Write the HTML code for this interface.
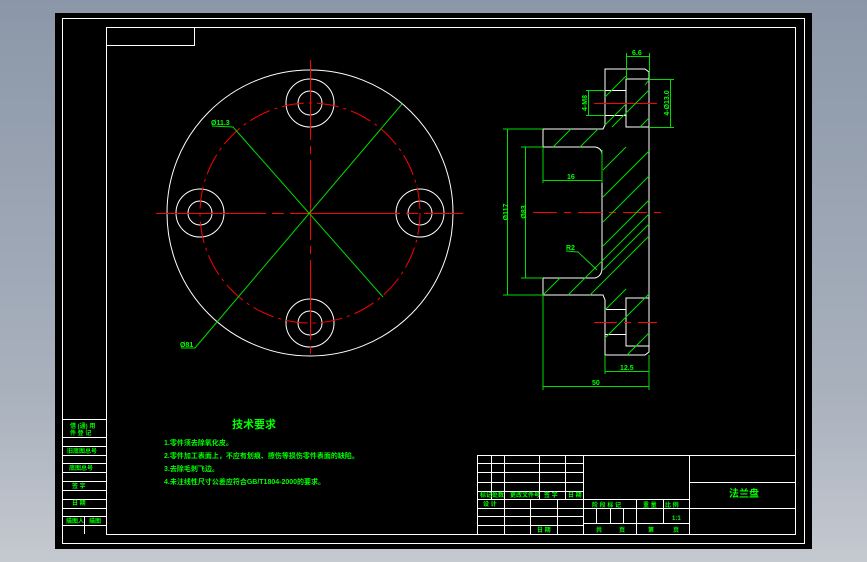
<!DOCTYPE html>
<html><head><meta charset="utf-8"><style>
html,body{margin:0;padding:0;width:867px;height:562px;overflow:hidden;background:linear-gradient(#8b97a8,#a9b1bd 70%,#c5c9d0);}
svg{position:absolute;left:0;top:0}
text{font-family:"Liberation Sans","Noto Sans CJK SC",sans-serif;fill:#00ff00;font-weight:bold}
</style></head><body>
<svg width="867" height="562" viewBox="0 0 867 562">
<rect x="55" y="13" width="757" height="536" fill="#000"/>
<g fill="none" stroke="#fff" stroke-width="1">
<rect x="62.5" y="18.5" width="742" height="525"/>
<rect x="106.5" y="27.5" width="689" height="507"/>
<rect x="106.5" y="27.5" width="88" height="18"/>
<!-- left strip -->
<line x1="62" y1="419.5" x2="106" y2="419.5"/>
<line x1="62" y1="437.5" x2="106" y2="437.5"/>
<line x1="62" y1="446.5" x2="106" y2="446.5"/>
<line x1="62" y1="455.5" x2="106" y2="455.5"/>
<line x1="62" y1="463.5" x2="106" y2="463.5"/>
<line x1="62" y1="472.5" x2="106" y2="472.5"/>
<line x1="62" y1="481.5" x2="106" y2="481.5"/>
<line x1="62" y1="490.5" x2="106" y2="490.5"/>
<line x1="62" y1="499.5" x2="106" y2="499.5"/>
<line x1="62" y1="508.5" x2="106" y2="508.5"/>
<line x1="62" y1="516.5" x2="106" y2="516.5"/>
<line x1="62" y1="525.5" x2="106" y2="525.5"/>
<line x1="84.5" y1="516" x2="84.5" y2="534"/>
<!-- title block -->
<rect x="477.5" y="455.5" width="318" height="79"/>
<line x1="477" y1="463.5" x2="583" y2="463.5"/>
<line x1="477" y1="472.5" x2="583" y2="472.5"/>
<line x1="477" y1="482.5" x2="583" y2="482.5"/>
<line x1="477" y1="491.5" x2="583" y2="491.5"/>
<line x1="477" y1="499.5" x2="689" y2="499.5"/>
<line x1="477" y1="508.5" x2="583" y2="508.5"/>
<line x1="477" y1="516.5" x2="583" y2="516.5"/>
<line x1="477" y1="525.5" x2="583" y2="525.5"/>
<line x1="491.5" y1="455" x2="491.5" y2="499"/>
<line x1="504.5" y1="455" x2="504.5" y2="534"/>
<line x1="539.5" y1="455" x2="539.5" y2="499"/>
<line x1="565.5" y1="455" x2="565.5" y2="499"/>
<line x1="530.5" y1="499" x2="530.5" y2="534"/>
<line x1="557.5" y1="499" x2="557.5" y2="534"/>
<line x1="583.5" y1="455" x2="583.5" y2="534"/>
<line x1="689.5" y1="455" x2="689.5" y2="534"/>
<line x1="583" y1="508.5" x2="689" y2="508.5"/>
<line x1="583" y1="523.5" x2="689" y2="523.5"/>
<line x1="596.5" y1="508" x2="596.5" y2="523"/>
<line x1="610.5" y1="508" x2="610.5" y2="523"/>
<line x1="623.5" y1="508" x2="623.5" y2="523"/>
<line x1="636.5" y1="499" x2="636.5" y2="534"/>
<line x1="663.5" y1="499" x2="663.5" y2="523"/>
<line x1="689" y1="482.5" x2="795" y2="482.5"/>
<line x1="689" y1="508.5" x2="795" y2="508.5"/>
<!-- front view -->
<circle cx="310" cy="213" r="143"/>
<circle cx="310" cy="103" r="24"/><circle cx="310" cy="103" r="12"/>
<circle cx="310" cy="323" r="24"/><circle cx="310" cy="323" r="12"/>
<circle cx="200" cy="213" r="24"/><circle cx="200" cy="213" r="12"/>
<circle cx="420" cy="213" r="24"/><circle cx="420" cy="213" r="12"/>
<!-- side view -->
<path d="M605 355 V300 L603 295 H543 V278 H595 Q602 276 602 268 V155 Q602 148 595 147 H543 V129 H603 L605 125 V69 H645 L649 72 V352 L645 355 Z"/>
<rect x="626" y="79" width="23" height="48"/>
<rect x="626" y="298" width="23" height="48"/>
<line x1="605" y1="90.5" x2="626" y2="90.5"/><line x1="605" y1="115.5" x2="626" y2="115.5"/>
<line x1="605" y1="309.5" x2="626" y2="309.5"/><line x1="605" y1="334.5" x2="626" y2="334.5"/>
</g>
<g fill="none" stroke="#ff0000" stroke-width="1">
<circle cx="310" cy="213" r="110" stroke-dasharray="22,5,3,5"/>
<line x1="310.5" y1="60" x2="310.5" y2="358" stroke-dasharray="80,6,8,6"/>
<line x1="156" y1="213.5" x2="463" y2="213.5" stroke-dasharray="110,6,12,6"/>
<line x1="533" y1="212.5" x2="666" y2="212.5" stroke-dasharray="24,7,7,7"/>
<line x1="594" y1="103.5" x2="657" y2="103.5"/>
<line x1="594" y1="322.5" x2="657" y2="322.5" stroke-dasharray="23,7,7,7"/>
</g>
<g fill="none" stroke="#00dd00" stroke-width="1">
<polyline points="402,104 217,322 195,348 181,348"/>
<polyline points="383,297 233,127 212,126"/>
<!-- hatch -->
<path d="M605 97 L626 76 M605 125 L626 104 M580 147 L598 129 M553 147 L571 129 M603 170 L626 147 M603 197 L649 151 M603 222 L649 176 M603 246 L649 200 M603 270 L649 224 M568 295 L649 214 M590 295 L649 236 M543 295 L560 278 M605 310 L626 289 M605 338 L649 294 M627 355 L649 333 M640 127 L649 118 M645 85 L649 80 M612 127 L649 90"/>
<path d="M503 129 H543 M507.5 129 V295 M503 295 H543 M521 147 H543 M525.5 147 V278 M521 278 H543"/>
<path d="M543 147 V183 M602 150 V183 M543 180.5 H602"/>
<path d="M605 355 V374 M649 355 V390 M543 295 V390 M605 371.5 H649 M543 386.5 H649"/>
<path d="M626.5 53 V79 M649.5 53 V79 M626 56.5 H649"/>
<path d="M649 79.5 H674 M649 127.5 H674 M670.5 79 V127"/>
<path d="M586 90.5 H605 M586 115.5 H605 M588.5 90 V115"/>
<polyline points="566,251 578,252 597,270"/>
</g>
<g font-size="7">
<text x="211" y="125" font-size="7">Ø11.3</text>
<text x="180" y="347">Ø81</text>
<text x="567" y="179">16</text>
<text x="566" y="250">R2</text>
<text x="620" y="370">12.5</text>
<text x="592" y="385">50</text>
<text x="632" y="55">6.6</text>
<text transform="translate(508,212) rotate(-90)" text-anchor="middle">Ø117</text>
<text transform="translate(526,212) rotate(-90)" text-anchor="middle">Ø83</text>
<text transform="translate(669,103) rotate(-90)" text-anchor="middle">4-Ø13.0</text>
<text transform="translate(587,103) rotate(-90)" text-anchor="middle">4-M8</text>
</g>
<text x="232" y="428" font-size="11">技术要求</text>
<g font-size="7">
<text x="164" y="445">1.零件须去除氧化皮。</text>
<text x="164" y="458">2.零件加工表面上，不应有划痕、擦伤等损伤零件表面的缺陷。</text>
<text x="164" y="471">3.去除毛刺飞边。</text>
<text x="164" y="484">4.未注线性尺寸公差应符合GB/T1804-2000的要求。</text>
</g>
<g font-size="6">
<text x="70" y="428">借 (通) 用</text>
<text x="70" y="435">件 登 记</text>
<text x="67" y="453">旧底图总号</text>
<text x="69" y="470">底图总号</text>
<text x="72" y="488">签 字</text>
<text x="72" y="505">日 期</text>
<text x="66" y="523">描图人</text>
<text x="89" y="523">描图</text>
<text x="480" y="497">标记</text>
<text x="492" y="497">处数</text>
<text x="510" y="497">更改文件号</text>
<text x="544" y="497">签 字</text>
<text x="568" y="497">日 期</text>
<text x="483" y="506">设 计</text>
<text x="537" y="532">日 期</text>
<text x="592" y="507">阶 段 标 记</text>
<text x="643" y="507">重 量</text>
<text x="665" y="507">比 例</text>
<text x="672" y="520">1:1</text>
<text x="596" y="532">共</text>
<text x="619" y="532">页</text>
<text x="648" y="532">第</text>
<text x="673" y="532">页</text>
</g>
<text x="729" y="497" font-size="10">法兰盘</text>
</svg>
</body></html>
